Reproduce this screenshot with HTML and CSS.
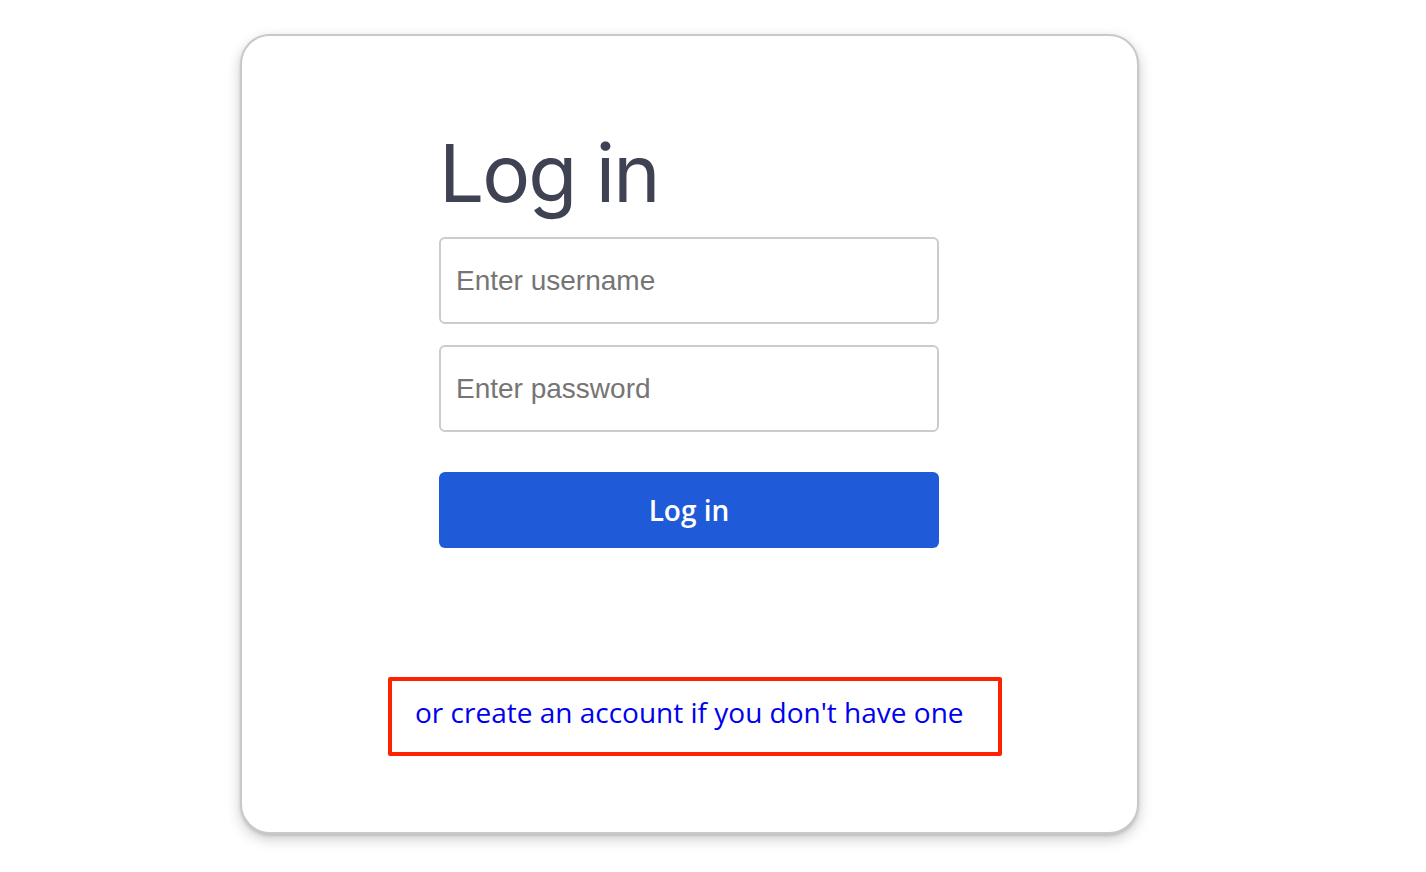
FILE: index.html
```html
<!DOCTYPE html>
<html>
<head>
<meta charset="utf-8">
<title>Log in</title>
<link rel="stylesheet" href="styles.css">
</head>
<body>
<div class="card">
  <form class="form">
    <h1 class="title">Log in</h1>
    <input class="field" type="text" placeholder="Enter username">
    <input class="field" type="password" placeholder="Enter password">
    <button class="btn" type="button">Log in</button>
  </form>
  <div class="signup">
    <a class="signup-link" href="#">or create an account if you don't have one</a>
  </div>
</div>
</body>
</html>
```
FILE: styles.css
```css
html, body {
  margin: 0;
  padding: 0;
  background: #ffffff;
}
body {
  padding: 34px 0 38px 240px;
}
.card {
  box-sizing: border-box;
  width: 899px;
  height: 800px;
  border: 2px solid #c9c9c9;
  border-radius: 30px;
  box-shadow: 0 5px 14px rgba(0, 0, 0, 0.2), 0 2px 3px rgba(0, 0, 0, 0.12);
  background: #fff;
  display: flex;
  flex-direction: column;
  align-items: flex-start;
}
.form {
  display: flex;
  flex-direction: column;
  margin-left: 197px;
  width: 500px;
  margin-top: 90px;
}
.title {
  margin: 0;
  font-family: "Inter", sans-serif;
  font-weight: 400;
  font-size: 80px;
  line-height: 100px;
  color: #3e4252;
  letter-spacing: -2px;
  position: relative;
  top: -3px;
}
.field {
  box-sizing: border-box;
  width: 500px;
  height: 87px;
  border: 2px solid #cccccc;
  border-radius: 6px;
  padding: 0 15px;
  font-family: "Liberation Sans", Arial, sans-serif;
  font-size: 28px;
  color: #333;
  outline: none;
}
.field::placeholder {
  color: #757575;
}
.field + .field {
  margin-top: 21px;
}
.title + .field {
  margin-top: 11px;
}
.btn {
  margin-top: 40px;
  width: 500px;
  height: 76px;
  border: none;
  border-radius: 6px;
  background: #1f5ad8;
  color: #ffffff;
  font-family: "Open Sans", sans-serif;
  font-weight: 600;
  font-size: 28px;
  cursor: pointer;
}
.signup {
  margin-top: 129px;
  margin-left: 146px;
  box-sizing: border-box;
  width: 614px;
  height: 79px;
  border: 4px solid #ff2200;
  border-radius: 2px;
  display: flex;
  align-items: center;
  padding-left: 23px;
  padding-bottom: 9px;
}
.signup-link {
  font-family: "Open Sans", sans-serif;
  font-size: 28px;
  color: #0000ee;
  text-decoration: none;
}
```
